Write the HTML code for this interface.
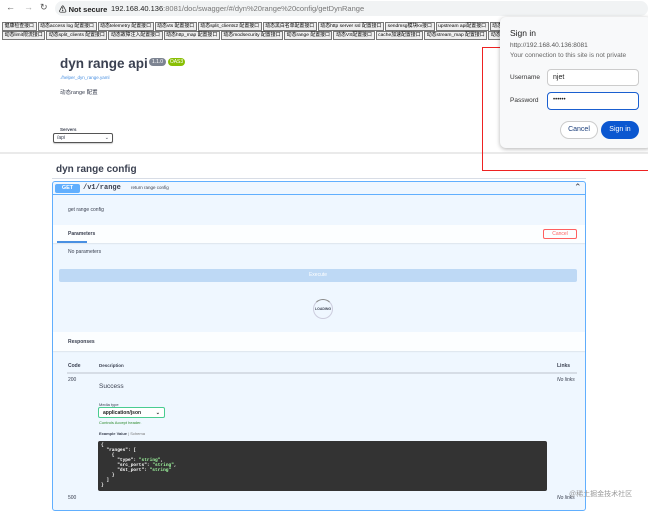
<!DOCTYPE html>
<html><head><meta charset="utf-8">
<style>
*{box-sizing:border-box;margin:0;padding:0}
body{width:648px;height:500px;overflow:hidden;background:#fff;font-family:"Liberation Sans","Noto Sans CJK SC",sans-serif;color:#3b4151;position:relative}
.abs{position:absolute}
.btn{flex:none;border:1px solid #777;background:#efefef;font-size:4.9px;height:9px;line-height:7px;padding:0 1.6px;margin-right:1px;white-space:nowrap;color:#000}
.row{position:absolute;left:2px;display:flex;height:9px;white-space:nowrap}
.mono{font-family:"Liberation Mono",monospace}
</style></head><body>
<div class="abs" style="left:6px;top:2px;font-size:9px;color:#555">←</div>
<div class="abs" style="left:24px;top:2px;font-size:9px;color:#aaa">→</div>
<div class="abs" style="left:40px;top:2px;font-size:9px;color:#555">↻</div>
<div class="abs" style="left:55px;top:1px;width:593px;height:15px;background:#f1f3f4;border-radius:8px"></div>
<div class="abs" style="left:59px;top:4px;font-size:7.5px;font-weight:bold;color:#222">⚠ Not secure</div>
<div class="abs" style="left:111px;top:4px;font-size:7.5px;color:#222">192.168.40.136<span style="color:#777">:8081/doc/swagger/#/dyn%20range%20config/getDynRange</span></div>
<div class="row" style="top:22px"><span class="btn">健康检查接口</span><span class="btn">动态access log 配置接口</span><span class="btn">动态telemetry 配置接口</span><span class="btn">动态vts 配置接口</span><span class="btn">动态split_clients2 配置接口</span><span class="btn">动态黑白名单配置接口</span><span class="btn">动态http server ssl 配置接口</span><span class="btn">sendmsg模块kv接口</span><span class="btn">upstream api配置接口</span><span class="btn">动态ssl</span></div>
<div class="row" style="top:31px"><span class="btn">动态limit限流接口</span><span class="btn">动态split_clients 配置接口</span><span class="btn">动态故障注入配置接口</span><span class="btn">动态http_map 配置接口</span><span class="btn">动态modsecurity 配置接口</span><span class="btn">动态range 配置接口</span><span class="btn">动态VS配置接口</span><span class="btn">cache加速配置接口</span><span class="btn">动态stream_map 配置接口</span><span class="btn">动态s</span></div>
<div class="abs" style="left:60px;top:56px;font-size:13.5px;font-weight:bold;color:#3b4151">dyn range api</div>
<div class="abs" style="left:149px;top:58px;width:17px;height:8px;border-radius:4px;background:#7d8492;color:#fff;font-size:5px;line-height:8px;text-align:center">1.1.0</div>
<div class="abs" style="left:168px;top:58px;width:17px;height:8px;border-radius:4px;background:#89bf04;color:#fff;font-size:5px;line-height:8px;text-align:center">OAS3</div>
<div class="abs" style="left:60px;top:75px;font-size:4.5px;color:#4990e2">./helper_dyn_range.yaml</div>
<div class="abs" style="left:60px;top:88px;font-size:5.5px">动态range 配置</div>
<div class="abs" style="left:60px;top:127px;font-size:4.5px;font-weight:bold">Servers</div>
<div class="abs" style="left:53px;top:133px;width:60px;height:10px;border:1px solid #555;border-radius:2px;font-size:5px;padding:1px 3px;box-shadow:0 1px 1px rgba(0,0,0,.2)">/api<span style="float:right">⌄</span></div>
<div class="abs" style="left:0;top:152px;width:648px;height:2px;background:#eaeaea"></div>
<div class="abs" style="left:56px;top:164px;font-size:10px;font-weight:bold">dyn range config</div>
<div class="abs" style="left:52px;top:178px;width:534px;height:1px;background:#d8dde6"></div>
<div class="abs" style="left:52px;top:181px;width:534px;height:330px;background:#eff7ff;border:1px solid #61affe;border-radius:3px"></div>
<div class="abs" style="left:53px;top:182px;width:532px;height:13px;border-bottom:1px solid #61affe"></div>
<div class="abs" style="left:55px;top:184px;width:25px;height:9px;background:#61affe;border-radius:2px;color:#fff;font-size:5.5px;font-weight:bold;text-align:center;line-height:9px">GET</div>
<div class="abs mono" style="left:83px;top:184px;font-size:7px;font-weight:bold">/v1/range</div>
<div class="abs" style="left:131px;top:185px;font-size:4.5px">return range config</div>
<div class="abs" style="left:574px;top:182px;font-size:9px">⌃</div>
<div class="abs" style="left:68px;top:207px;font-size:5px">get range config</div>
<div class="abs" style="left:53px;top:225px;width:532px;height:18px;background:rgba(255,255,255,.8);box-shadow:0 1px 1px rgba(0,0,0,.08)"></div>
<div class="abs" style="left:68px;top:231px;font-size:5px;font-weight:bold">Parameters</div>
<div class="abs" style="left:57px;top:241px;width:30px;height:1.5px;background:#4990e2"></div>
<div class="abs" style="left:543px;top:229px;width:34px;height:10px;border:1px solid #ff6060;border-radius:2px;color:#ff6060;font-size:5px;text-align:center;line-height:8px">Cancel</div>
<div class="abs" style="left:68px;top:249px;font-size:5px">No parameters</div>
<div class="abs" style="left:59px;top:269px;width:518px;height:13px;background:#bed9f5;border-radius:2px;color:#fff;font-size:5px;text-align:center;line-height:13px">Execute</div>
<div class="abs" style="left:313px;top:299px;width:20px;height:20px;border-radius:50%;border:1px solid #ccd;border-top-color:#888"></div>
<div class="abs" style="left:315px;top:307px;font-size:3.5px;font-weight:bold">LOADING</div>
<div class="abs" style="left:53px;top:332px;width:532px;height:19px;background:rgba(255,255,255,.8);box-shadow:0 1px 1px rgba(0,0,0,.08)"></div>
<div class="abs" style="left:68px;top:339px;font-size:5px;font-weight:bold">Responses</div>
<div class="abs" style="left:68px;top:363px;font-size:5px;font-weight:bold">Code</div>
<div class="abs" style="left:99px;top:363px;font-size:4.5px;font-weight:bold">Description</div>
<div class="abs" style="left:557px;top:363px;font-size:5px;font-weight:bold">Links</div>
<div class="abs" style="left:67px;top:372px;width:510px;height:1.5px;background:#d6dde6"></div>
<div class="abs" style="left:68px;top:377px;font-size:5px">200</div>
<div class="abs" style="left:557px;top:377px;font-size:5px;font-style:italic">No links</div>
<div class="abs" style="left:99px;top:383px;font-size:6.5px">Success</div>
<div class="abs" style="left:99px;top:402px;font-size:4px">Media type</div>
<div class="abs" style="left:98px;top:407px;width:67px;height:11px;border:1px solid #49cc90;border-radius:2px;background:#fff;font-size:5px;font-weight:bold;padding:2px 4px;color:#222">application/json<span style="float:right">⌄</span></div>
<div class="abs" style="left:99px;top:420px;font-size:4px;color:#2a8a2a">Controls Accept header.</div>
<div class="abs" style="left:99px;top:431px;font-size:4px;font-weight:bold">Example Value <span style="font-weight:normal;color:#777">| Schema</span></div>
<div class="abs mono" style="left:98px;top:441px;width:449px;height:50px;background:#333;border-radius:2px;color:#fff;font-size:4.5px;line-height:5px;padding:2px 3px;white-space:pre;font-weight:bold">{
  "ranges": [
    {
      "type": <span style="color:#a2fca2">"string"</span>,
      "src_ports": <span style="color:#a2fca2">"string"</span>,
      "dst_port": <span style="color:#a2fca2">"string"</span>
    }
  ]
}</div>
<div class="abs" style="left:68px;top:495px;font-size:5px">500</div>
<div class="abs" style="left:557px;top:495px;font-size:5px;font-style:italic">No links</div>
<div class="abs" style="left:569px;top:489px;font-size:7px;color:#999">@稀土掘金技术社区</div>
<div class="abs" style="left:482px;top:47px;width:170px;height:124px;border:1.5px solid #e22"></div>
<div class="abs" style="left:500px;top:17px;width:152px;height:131px;background:#f8f9fa;border-radius:6px;box-shadow:0 1px 4px rgba(0,0,0,.3)"></div>
<div class="abs" style="left:510px;top:28px;font-size:8.5px;color:#222">Sign in</div>
<div class="abs" style="left:510px;top:42px;font-size:6.5px;color:#555;height:6px;overflow:hidden">http://192.168.40.136:8081</div>
<div class="abs" style="left:510px;top:52px;font-size:6.5px;color:#666">Your connection to this site is not private</div>
<div class="abs" style="left:510px;top:74px;font-size:6.5px;color:#333">Username</div>
<div class="abs" style="left:547px;top:69px;width:92px;height:17px;border:1px solid #ccc;border-radius:4px;background:#fff;font-size:7px;padding:4px 5px;color:#222">njet</div>
<div class="abs" style="left:510px;top:97px;font-size:6.5px;color:#333">Password</div>
<div class="abs" style="left:547px;top:92px;width:92px;height:18px;border:1.5px solid #1a5fd0;border-radius:4px;background:#fff;font-size:6px;padding:4px 5px;color:#222">••••••</div>
<div class="abs" style="left:560px;top:121px;width:38px;height:18px;border:1px solid #ccc;border-radius:9px;background:#fff;font-size:7px;text-align:center;line-height:16px;color:#1a3d7a">Cancel</div>
<div class="abs" style="left:601px;top:121px;width:38px;height:18px;border-radius:9px;background:#0b57d0;font-size:7px;text-align:center;line-height:18px;color:#fff">Sign in</div>
</body></html>
